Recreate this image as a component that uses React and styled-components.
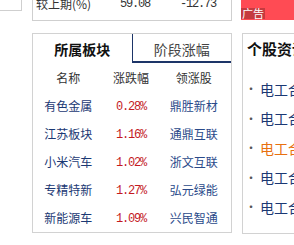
import React from "react";
import styled, { createGlobalStyle } from "styled-components";

const CN = `"Noto Sans CJK SC", "Liberation Sans", sans-serif`;
const NUM = `"Liberation Mono", monospace`;

const GlobalStyle = createGlobalStyle`
  html, body {
    margin: 0;
    padding: 0;
    background: #fff;
    overflow: hidden;
  }
  body {
    font-family: ${CN};
    font-size: 12px;
    color: #333;
  }
`;

const Page = styled.div`
  width: 294px;
  height: 245px;
  overflow: hidden;
`;

const TopRow = styled.div`
  display: flex;
  align-items: flex-start;
  height: 21px;
`;

const Stub = styled.div`
  flex: 0 0 22px;
  height: 11px;
  box-sizing: border-box;
  border-right: 1px solid #cfcfcf;
  border-bottom: 1px solid #cfcfcf;
  margin-right: 10px;
`;

const StatsBox = styled.div`
  flex: 0 0 200px;
  height: 21px;
  box-sizing: border-box;
  border: 1px solid #cfcfcf;
  border-top: none;
  display: flex;
  align-items: flex-end;
  padding: 0 0 9px 3px;
  margin-right: 9px;
`;

const StatsLine = styled.div`
  display: grid;
  grid-template-columns: 84px 60px auto;
  line-height: 14px;
  color: #333;
`;

const Num = styled.span`
  font-family: ${NUM};
  font-size: 12px;
  letter-spacing: -1.2px;
  color: ${(p) => p.$color || "inherit"};
`;

const Ad = styled.div`
  flex: 1 0 53px;
  height: 20px;
  background: #ff4b54;
  display: flex;
  align-items: flex-end;
`;

const AdTag = styled.span`
  background: #c53a40;
  color: #fff;
  font-size: 11px;
  line-height: 11px;
  padding: 0 1px;
  margin-bottom: 1px;
`;

const PanelRow = styled.div`
  display: flex;
  align-items: flex-start;
  margin-top: 12px;
  padding-left: 32px;
  gap: 10px;
`;

const Panel = styled.div`
  flex: 0 0 ${(p) => p.$w}px;
  box-sizing: border-box;
  border: 1px solid #d2d2d2;
  padding-bottom: 1px;
`;

const Tabs = styled.div`
  display: flex;
  height: 29px;
`;

const Tab = styled.div`
  flex: 1;
  box-sizing: border-box;
  display: flex;
  align-items: center;
  justify-content: center;
  font-size: 14px;
  font-weight: ${(p) => (p.$active ? 700 : 400)};
  color: ${(p) => (p.$active ? "#111" : "#444")};
  border-left: ${(p) => (p.$active ? "none" : "1px solid #1d3568")};
  border-bottom: ${(p) => (p.$active ? "none" : "2px solid #1d3568")};
  padding-top: ${(p) => (p.$active ? 0 : 2)}px;
`;

const Table = styled.div`
  display: grid;
  grid-template-columns: repeat(3, 1fr);
  grid-auto-rows: 28px;
  padding: 0 6px 0 4px;
  align-items: center;
  text-align: center;
`;

const Cell = styled.div`
  font-size: 12px;
  color: ${(p) => p.$color || "#1b3873"};
`;

const Title = styled.div`
  height: 29px;
  display: flex;
  align-items: center;
  padding-left: 4px;
  font-size: 15px;
  font-weight: 700;
  color: #111;
  white-space: nowrap;
`;

const List = styled.ul`
  list-style: none;
  margin: 11px 0 0;
  padding: 0 0 10px 2px;
`;

const Item = styled.li`
  display: flex;
  align-items: center;
  height: 29.5px;
  font-size: 14px;
  white-space: nowrap;
  color: ${(p) => (p.$hot ? "#e8700f" : "#1b3873")};

  &::before {
    content: "·";
    width: 15px;
    color: #555;
    font-size: 12px;
  }
`;

const ROWS = [
  ["有色金属", "0.28%", "鼎胜新材"],
  ["江苏板块", "1.16%", "通鼎互联"],
  ["小米汽车", "1.02%", "浙文互联"],
  ["专精特新", "1.27%", "弘元绿能"],
  ["新能源车", "1.09%", "兴民智通"],
];

const NEWS = [
  "电工合金：关于公司",
  "电工合金：董事会决议",
  "电工合金：年度报告",
  "电工合金：监事会公告",
  "电工合金：股东大会",
];

export default function App() {
  return (
    <Page>
      <GlobalStyle />
      <TopRow>
        <Stub />
        <StatsBox>
          <StatsLine>
            <span>较上期(%)</span>
            <Num>59.08</Num>
            <Num>-12.73</Num>
          </StatsLine>
        </StatsBox>
        <Ad>
          <AdTag>广告</AdTag>
        </Ad>
      </TopRow>

      <PanelRow>
        <Panel $w={200}>
          <Tabs>
            <Tab $active>所属板块</Tab>
            <Tab>阶段涨幅</Tab>
          </Tabs>
          <Table>
            <Cell $color="#333">名称</Cell>
            <Cell $color="#333">涨跌幅</Cell>
            <Cell $color="#333">领涨股</Cell>
            {ROWS.map(([name, pct, stock]) => (
              <React.Fragment key={name}>
                <Cell>{name}</Cell>
                <Cell>
                  <Num $color="#c41a1f">{pct}</Num>
                </Cell>
                <Cell $color="#2a4a8a">{stock}</Cell>
              </React.Fragment>
            ))}
          </Table>
        </Panel>

        <Panel $w={200}>
          <Title>个股资讯</Title>
          <List>
            {NEWS.map((t, i) => (
              <Item key={t} $hot={i === 2}>
                {t}
              </Item>
            ))}
          </List>
        </Panel>
      </PanelRow>
    </Page>
  );
}
